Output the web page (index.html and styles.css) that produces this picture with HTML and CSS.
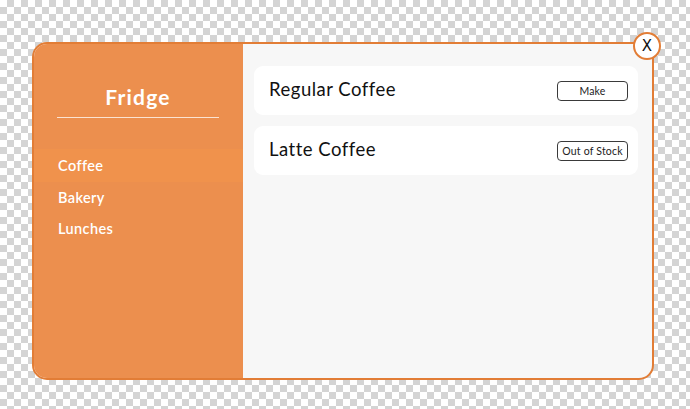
FILE: index.html
```html
<!DOCTYPE html>
<html>
<head>
<meta charset="utf-8">
<link rel="stylesheet" href="styles.css">
</head>
<body>
<div class="stage">
  <div class="modal">
    <aside class="sidebar">
      <h1 class="title">Fridge</h1>
      <nav class="menu">
        <div class="item active">Coffee</div>
        <div class="item">Bakery</div>
        <div class="item">Lunches</div>
      </nav>
    </aside>
    <main class="content">
      <div class="card">
        <span class="name">Regular Coffee</span>
        <button class="btn">Make</button>
      </div>
      <div class="card">
        <span class="name">Latte Coffee</span>
        <button class="btn">Out of Stock</button>
      </div>
    </main>
    <button class="close">X</button>
  </div>
</div>
</body>
</html>
```
FILE: styles.css
```css
html, body {
  margin: 0;
  padding: 0;
}
body {
  width: 690px;
  height: 409px;
  overflow: hidden;
  font-family: "Lato", "Noto Sans", sans-serif;
  background-color: #ffffff;
  background-image:
    linear-gradient(45deg, #d4d4d4 25%, transparent 25%, transparent 75%, #d4d4d4 75%),
    linear-gradient(45deg, #d4d4d4 25%, transparent 25%, transparent 75%, #d4d4d4 75%);
  background-size: 14px 14px;
  background-position: 0 0, 7px 7px;
}
.stage {
  padding: 42px 0 0 32px;
}
.modal {
  position: relative;
  width: 618px;
  height: 334px;
  border: 2px solid #e27d36;
  border-radius: 15px;
  display: flex;
  background: #f7f7f7;
}
.sidebar {
  width: 209px;
  background: #ec8f4e;
  border-radius: 13px 0 0 13px;
  display: flex;
  flex-direction: column;
}
.title {
  margin: 40px 24px 0 23px;
  padding-bottom: 7px;
  border-bottom: 1.5px solid #fbe3d2;
  text-align: center;
  color: #fff;
  font-size: 21px;
  font-weight: 700;
  letter-spacing: 1.2px;
  line-height: 26px;
}
.menu {
  margin-top: 31px;
  display: flex;
  flex-direction: column;
}
.item {
  height: 31px;
  line-height: 31px;
  padding-left: 24px;
  color: #fff;
  font-size: 14.5px;
  font-weight: 600;
  letter-spacing: 0.4px;
}
.item.active {
  background: #f0924c;
  height: 33px;
  line-height: 33px;
}
.content {
  flex: 1;
  padding: 22px 14px 0 11px;
  display: flex;
  flex-direction: column;
  gap: 11px;
}
.card {
  height: 49px;
  background: #fff;
  border-radius: 9px;
  display: flex;
  align-items: center;
  justify-content: space-between;
  padding: 0 10px 0 15px;
}
.card .name {
  font-size: 18.5px;
  color: #111;
  letter-spacing: 0.5px;
  margin-top: -3px;
}
.btn {
  width: 71px;
  height: 20px;
  border: 1px solid #3a3a3a;
  border-radius: 4px;
  background: #fff;
  font-family: "Lato", "Noto Sans", sans-serif;
  font-size: 10.5px;
  color: #222;
  padding: 0;
  letter-spacing: 0.2px;
}
.close {
  position: absolute;
  top: -12px;
  right: -9px;
  width: 28px;
  height: 28px;
  border-radius: 50%;
  border: 2px solid #e27d36;
  background: #fff;
  color: #111;
  font-family: "DejaVu Sans", sans-serif;
  font-size: 15px;
  line-height: 22px;
  padding: 0;
  text-align: center;
}
```
